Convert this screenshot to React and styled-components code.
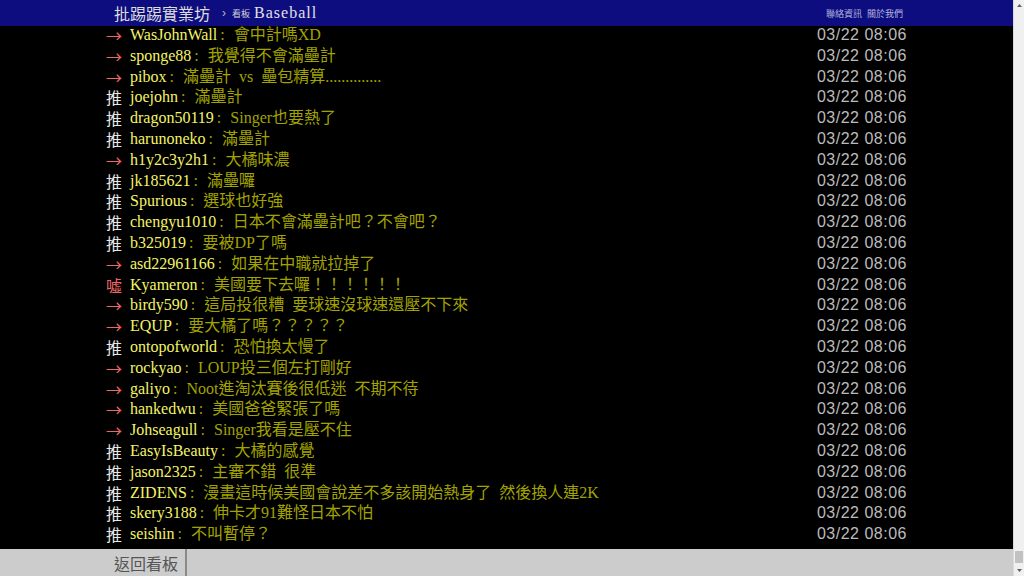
import React from "react";
import styled, { createGlobalStyle } from "styled-components";

const GlobalStyle = createGlobalStyle`
  html, body { margin: 0; padding: 0; background: #000; overflow: hidden; }
  #root { height: 576px; }
`;

const Page = styled.div`
  display: flex;
  width: 1024px;
  height: 576px;
  background: #000;
`;

const Main = styled.div`
  flex: 1;
  min-width: 0;
  display: flex;
  flex-direction: column;
`;

const Header = styled.header`
  flex-shrink: 0;
  height: 26px;
  background: #0d0d80;
`;

const Bar = styled.div`
  width: 801px;
  height: 100%;
  margin: 0 auto;
  box-sizing: border-box;
  display: flex;
  align-items: center;
`;

const HeaderBar = styled(Bar)`
  padding: 0 4px 0 8px;
`;

const Brand = styled.span`
  font-family: "Noto Sans CJK TC", sans-serif;
  font-size: 16px;
  color: #dcdcdc;
`;

const Crumb = styled.span`
  font-family: "Liberation Sans", sans-serif;
  font-size: 12px;
  color: #b8b8c8;
  margin: 0 6px 0 12px;
`;

const BoardLabel = styled.span`
  font-family: "Noto Sans CJK TC", sans-serif;
  font-size: 9px;
  color: #d0d0d8;
  margin-right: 4px;
`;

const BoardName = styled.span`
  font-family: "Liberation Serif", serif;
  font-size: 16px;
  letter-spacing: 1px;
  color: #e0e0e8;
`;

const HeaderLinks = styled.nav`
  margin-left: auto;
  display: flex;
  gap: 5px;
  font-family: "Noto Sans CJK TC", sans-serif;
  font-size: 9px;
  color: #b4b4dc;
`;

const Content = styled.main`
  flex: 1;
  overflow: hidden;
  background: #000;
`;

const List = styled.div`
  width: 801px;
  margin: -1px auto 0;
`;

const Row = styled.div`
  display: flex;
  height: 20.8px;
  line-height: 20.8px;
  font-family: "Liberation Serif", "Noto Sans CJK TC", serif;
  font-size: 16px;
  white-space: nowrap;
`;

const Tag = styled.span`
  display: inline-block;
  width: 24px;
  font-family: "Noto Sans CJK TC", sans-serif;
  color: ${(p) => (p.$kind === "推" ? "#e8e8e8" : "#f06666")};
`;

const User = styled.span`
  color: #f4f466;
`;

const Colon = styled.span`
  display: inline-block;
  padding: 0 9px 0 3px;
  color: #a0a000;
`;

const Text = styled.span`
  color: #a3a300;
  word-spacing: 4px;
`;

const Time = styled.span`
  margin-left: auto;
  font-family: "Liberation Sans", sans-serif;
  font-size: 16px;
  letter-spacing: 0.5px;
  color: #bbbbbb;
`;

const Footer = styled.footer`
  flex-shrink: 0;
  height: 27px;
  background: #cccccc;
`;

const BackButton = styled.span`
  display: flex;
  align-items: center;
  height: 100%;
  padding: 0 7px 0 8px;
  border-right: 2px solid #8a8a8a;
  font-family: "Noto Sans CJK TC", sans-serif;
  font-size: 16px;
  color: #555;
`;

const Scrollbar = styled.div`
  width: 11px;
  flex-shrink: 0;
  display: flex;
  flex-direction: column;
  background: #f0f0f0;
  border-left: 1px solid #dadada;
  box-sizing: border-box;
`;

const ScrollArrow = styled.div`
  height: 11px;
  display: flex;
  align-items: center;
  justify-content: center;
`;

const Track = styled.div`
  flex: 1;
  display: flex;
  flex-direction: column;
  justify-content: flex-end;
  padding-bottom: 2px;
`;

const Thumb = styled.div`
  height: 12px;
  margin: 0 1px;
  background: #c1c1c1;
`;

const pushes = [
  ["→", "WasJohnWall", "會中計嗎XD"],
  ["→", "sponge88", "我覺得不會滿壘計"],
  ["→", "pibox", "滿壘計 vs 壘包精算.............."],
  ["推", "joejohn", "滿壘計"],
  ["推", "dragon50119", "Singer也要熱了"],
  ["推", "harunoneko", "滿壘計"],
  ["→", "h1y2c3y2h1", "大橘味濃"],
  ["推", "jk185621", "滿壘囉"],
  ["推", "Spurious", "選球也好強"],
  ["推", "chengyu1010", "日本不會滿壘計吧？不會吧？"],
  ["推", "b325019", "要被DP了嗎"],
  ["→", "asd22961166", "如果在中職就拉掉了"],
  ["噓", "Kyameron", "美國要下去囉！！！！！！"],
  ["→", "birdy590", "這局投很糟 要球速沒球速還壓不下來"],
  ["→", "EQUP", "要大橘了嗎？？？？？"],
  ["推", "ontopofworld", "恐怕換太慢了"],
  ["→", "rockyao", "LOUP投三個左打剛好"],
  ["→", "galiyo", "Noot進淘汰賽後很低迷 不期不待"],
  ["→", "hankedwu", "美國爸爸緊張了嗎"],
  ["→", "Johseagull", "Singer我看是壓不住"],
  ["推", "EasyIsBeauty", "大橘的感覺"],
  ["推", "jason2325", "主審不錯 很準"],
  ["推", "ZIDENS", "漫畫這時候美國會說差不多該開始熱身了 然後換人連2K"],
  ["推", "skery3188", "伸卡才91難怪日本不怕"],
  ["推", "seishin", "不叫暫停？"],
];

export default function App() {
  return (
    <>
      <GlobalStyle />
      <Page>
        <Main>
          <Header>
            <HeaderBar>
              <Brand>批踢踢實業坊</Brand>
              <Crumb>›</Crumb>
              <BoardLabel>看板</BoardLabel>
              <BoardName>Baseball</BoardName>
              <HeaderLinks>
                <span>聯絡資訊</span>
                <span>關於我們</span>
              </HeaderLinks>
            </HeaderBar>
          </Header>
          <Content>
            <List>
              {pushes.map(([tag, user, text], i) => (
                <Row key={i}>
                  <Tag $kind={tag}>{tag}</Tag>
                  <User>{user}</User>
                  <Colon>:</Colon>
                  <Text>{text}</Text>
                  <Time>03/22 08:06</Time>
                </Row>
              ))}
            </List>
          </Content>
          <Footer>
            <Bar>
              <BackButton>返回看板</BackButton>
            </Bar>
          </Footer>
        </Main>
        <Scrollbar>
          <ScrollArrow>
            <svg width="5" height="3" viewBox="0 0 5 3">
              <path d="M0 3 L2.5 0 L5 3 Z" fill="#606060" />
            </svg>
          </ScrollArrow>
          <Track>
            <Thumb />
          </Track>
          <ScrollArrow>
            <svg width="5" height="3" viewBox="0 0 5 3">
              <path d="M0 0 L5 0 L2.5 3 Z" fill="#606060" />
            </svg>
          </ScrollArrow>
        </Scrollbar>
      </Page>
    </>
  );
}
